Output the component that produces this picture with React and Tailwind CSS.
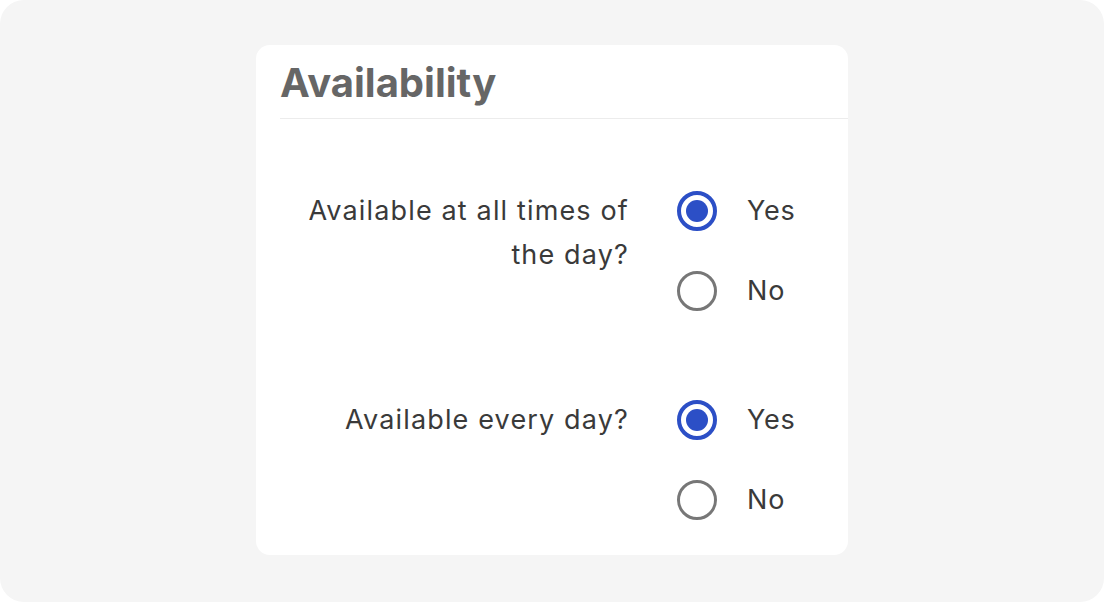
import React, { useState } from "react";

const questions = [
  { id: "times", label: "Available at all times of the day?" },
  { id: "days", label: "Available every day?" },
];

const Radio = ({ checked, label, onClick }) => (
  <button type="button" onClick={onClick} className="flex items-center h-[44px] text-left">
    {checked ? (
      <span className="w-[40px] h-[40px] rounded-full border-[4px] border-[#2c4fc6] flex items-center justify-center">
        <span className="w-[22px] h-[22px] rounded-full bg-[#2c4fc6]" />
      </span>
    ) : (
      <span className="w-[40px] h-[40px] rounded-full border-[3px] border-[#777777]" />
    )}
    <span className="ml-[30px] text-[27px] tracking-[0.8px] text-[#3a3a3a]">{label}</span>
  </button>
);

export default function App() {
  const [answers, setAnswers] = useState({ times: "yes", days: "yes" });

  return (
    <div className="w-[1104px] h-[602px] bg-white" style={{ fontFamily: "Inter, 'Noto Sans', sans-serif" }}>
      <div className="w-full h-full rounded-[24px] bg-[#f5f5f5] pt-[45px] flex justify-center">
        <div className="w-[592px] h-[510px] bg-white rounded-[14px] pl-[24px]">
          <h2 className="text-[40px] font-bold text-[#666666] leading-none pt-[18px] pb-[15px] border-b border-[#ececec]">
            Availability
          </h2>
          <div className="pt-[70px] flex flex-col gap-[85px]">
            {questions.map((q) => (
              <div key={q.id} className="flex">
                <div className="w-[349px] text-right text-[27px] tracking-[1.15px] leading-[44px] text-[#3a3a3a]">
                  {q.label}
                </div>
                <div className="ml-[48px] flex flex-col gap-[36px]">
                  <Radio
                    checked={answers[q.id] === "yes"}
                    label="Yes"
                    onClick={() => setAnswers({ ...answers, [q.id]: "yes" })}
                  />
                  <Radio
                    checked={answers[q.id] === "no"}
                    label="No"
                    onClick={() => setAnswers({ ...answers, [q.id]: "no" })}
                  />
                </div>
              </div>
            ))}
          </div>
        </div>
      </div>
    </div>
  );
}
